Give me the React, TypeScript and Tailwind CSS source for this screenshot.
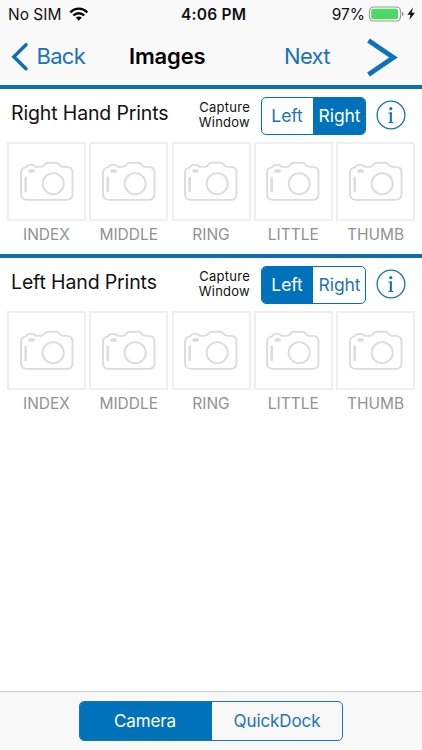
import { useState } from 'react';

const fingers = ['INDEX', 'MIDDLE', 'RING', 'LITTLE', 'THUMB'];

function CameraIcon() {
  return (
    <svg className="w-[56px] h-[42px]" viewBox="0 0.600 56 42" fill="none" stroke="#dcdcdf" strokeWidth="1.900" strokeLinejoin="round" strokeLinecap="round">
      <path d="M2 12.500C2 9.500 4 7.500 7 7C8 4.800 8.500 4.500 10.500 4.500H13.500C15.500 4.500 15.800 6.500 17.500 6.500H22C25 6.500 25.500 2.300 28.500 2.300H37.500C40.500 2.300 41 6.500 44 6.500H47.500C51.500 6.500 53.500 8.500 53.500 12V33.500C53.500 37.500 51.500 39.500 47.500 39.500H8C4 39.500 2 37.500 2 33.500Z" />
      <circle cx="34.200" cy="23.300" r="10.600" />
      <path d="M6.700 17.500V30.500" strokeWidth="2.600" />
      <ellipse cx="12.600" cy="10.500" rx="2.400" ry="1" fill="#dcdcdf" />
    </svg>
  );
}

function InfoIcon() {
  return (
    <svg className="w-[30px] h-[30px]" viewBox="0 0 30 30" fill="none">
      <circle cx="15" cy="15" r="13.900" stroke="#1673b8" strokeWidth="1.300" />
      <circle cx="14.800" cy="8.700" r="1.600" fill="#1673b8" />
      <path d="M12.300 12.700L15.900 12V21.700L17.600 22.500V23.100H12.100V22.500L13.800 21.700V13.600L12.300 13.400Z" fill="#1673b8" />
    </svg>
  );
}

function HandSection({ title, initial }: { title: string; initial: 'Left' | 'Right' }) {
  const [side, setSide] = useState(initial);

  return (
    <section className="h-[169px] border-t-4 border-[#0f6db5]">
      <div className="h-[53px] flex items-start">
        <h2 className="w-[187px] pl-[11px] pt-[10px] text-[19.500px] leading-[28px] tracking-[-0.140px] whitespace-nowrap">{title}</h2>
        <div className="w-[63px] pt-[11px] text-right text-[13px] leading-[15px] tracking-[0.250px]">
          Capture
          <br />
          Window
        </div>
        <div className="ml-[11px] mt-[8px] w-[105px] h-[38px] flex rounded-[5px] border border-[#0072bc] overflow-hidden text-[17.500px] tracking-[-0.100px]">
          <button
            onClick={() => setSide('Left')}
            className={`w-[51px] pr-px ${side === 'Left' ? 'bg-[#0072bc] text-white' : 'text-[#1c74ba]'}`}
          >
            Left
          </button>
          <button
            onClick={() => setSide('Right')}
            className={`flex-1 pl-px ${side === 'Right' ? 'bg-[#0072bc] text-white' : 'text-[#1c74ba]'}`}
          >
            Right
          </button>
        </div>
        <button className="ml-[10px] mt-[11px]" aria-label="Info">
          <InfoIcon />
        </button>
      </div>
      <div className="flex justify-between px-[7px]">
        {fingers.map((name) => (
          <div key={name} className="w-[79px] flex flex-col items-center">
            <div className="w-[79px] h-[79px] border-2 border-[#efeff1] flex items-center justify-center">
              <CameraIcon />
            </div>
            <span className="mt-[4px] text-[15.500px] leading-[20px] text-[#919191]">{name}</span>
          </div>
        ))}
      </div>
    </section>
  );
}

function StatusBar() {
  return (
    <div className="h-[28px] flex items-center text-[15.500px] leading-[28px]">
      <span className="w-[69px] pl-[8px] pt-px whitespace-nowrap">No SIM</span>
      <svg className="w-[20px] h-[15px]" viewBox="0 0 20 15" fill="none" stroke="#000" strokeWidth="2.300">
        <path d="M1.300 5.300C6.300 .5 13.300 .5 18.300 5.300" />
        <path d="M4.300 8.500C7.500 5.500 12.100 5.500 15.300 8.500" />
        <path d="M9.800 13.700L6.700 10.600C8.500 9 11.100 9 12.900 10.600Z" fill="#000" stroke="none" />
      </svg>
      <span className="w-[92px]" />
      <span className="w-[66px] pt-px font-semibold tracking-[0.250px] whitespace-nowrap">4:06 PM</span>
      <span className="w-[118px] pt-px text-right">97%</span>
      <svg className="ml-[3px] w-[54px] h-[18px]" viewBox="0 0 54 18" fill="none">
        <rect x="1.500" y="2" width="31" height="14" rx="4" stroke="#9c9c9e" strokeWidth="1.200" />
        <rect x="3.200" y="3.700" width="26.800" height="10.600" rx="2" fill="#4cd964" />
        <path d="M34 6.500C36 7.500 36 10.500 34 11.500Z" fill="#8e8e90" />
        <path d="M45 2.500L39.300 9.700H42.500L41.300 15L47 7.700H43.700Z" fill="#111" />
      </svg>
    </div>
  );
}

export default function App() {
  return (
    <main className="w-[422px] h-[750px] flex flex-col bg-white text-[#111] overflow-hidden font-['Inter',sans-serif]">
      <header className="h-[85px] shrink-0 bg-[#f9f9f9]">
        <StatusBar />
        <nav className="h-[57px] flex items-center">
          <button className="w-[129px] pl-[11px] flex items-center gap-[7.500px] text-[22px] text-[#1873b9] tracking-[-0.700px]">
            <svg className="w-[18px] h-[28px]" viewBox="0 0 18 28" fill="none" stroke="#0d70b7" strokeWidth="3.400" strokeLinecap="round">
              <path d="M15 1.700L2.800 13.700L15 25.700" />
            </svg>
            Back
          </button>
          <h1 className="w-[155px] text-[22px] font-semibold tracking-[-0.150px] text-black">Images</h1>
          <button className="flex items-center text-[22px] text-[#1873b9] tracking-[-0.700px]">
            <span className="w-[81px] text-left">Next</span>
            <svg className="w-[34px] h-[42px]" viewBox="0 0 34 42" fill="none" stroke="#0d72b9" strokeWidth="4.800">
              <path d="M3.500 4.500L28.500 21.500L3.500 38.500" />
            </svg>
          </button>
        </nav>
      </header>
      <div className="flex-1">
        <HandSection title="Right Hand Prints" initial="Right" />
        <HandSection title="Left Hand Prints" initial="Left" />
      </div>
      <footer className="h-[59px] shrink-0 border-t border-[#c9cbcb] bg-[#f8f8f8] pt-[9px] pl-[79px]">
        <div className="w-[264px] h-[40px] flex rounded-[5px] border border-[#1c74ba] overflow-hidden text-[17px] tracking-[-0.100px]">
          <button className="flex-1 pt-0.5 pr-[2px] bg-[#0072bc] text-white">Camera</button>
          <button className="flex-1 pt-0.5 text-[#1c74ba]">QuickDock</button>
        </div>
      </footer>
    </main>
  );
}
